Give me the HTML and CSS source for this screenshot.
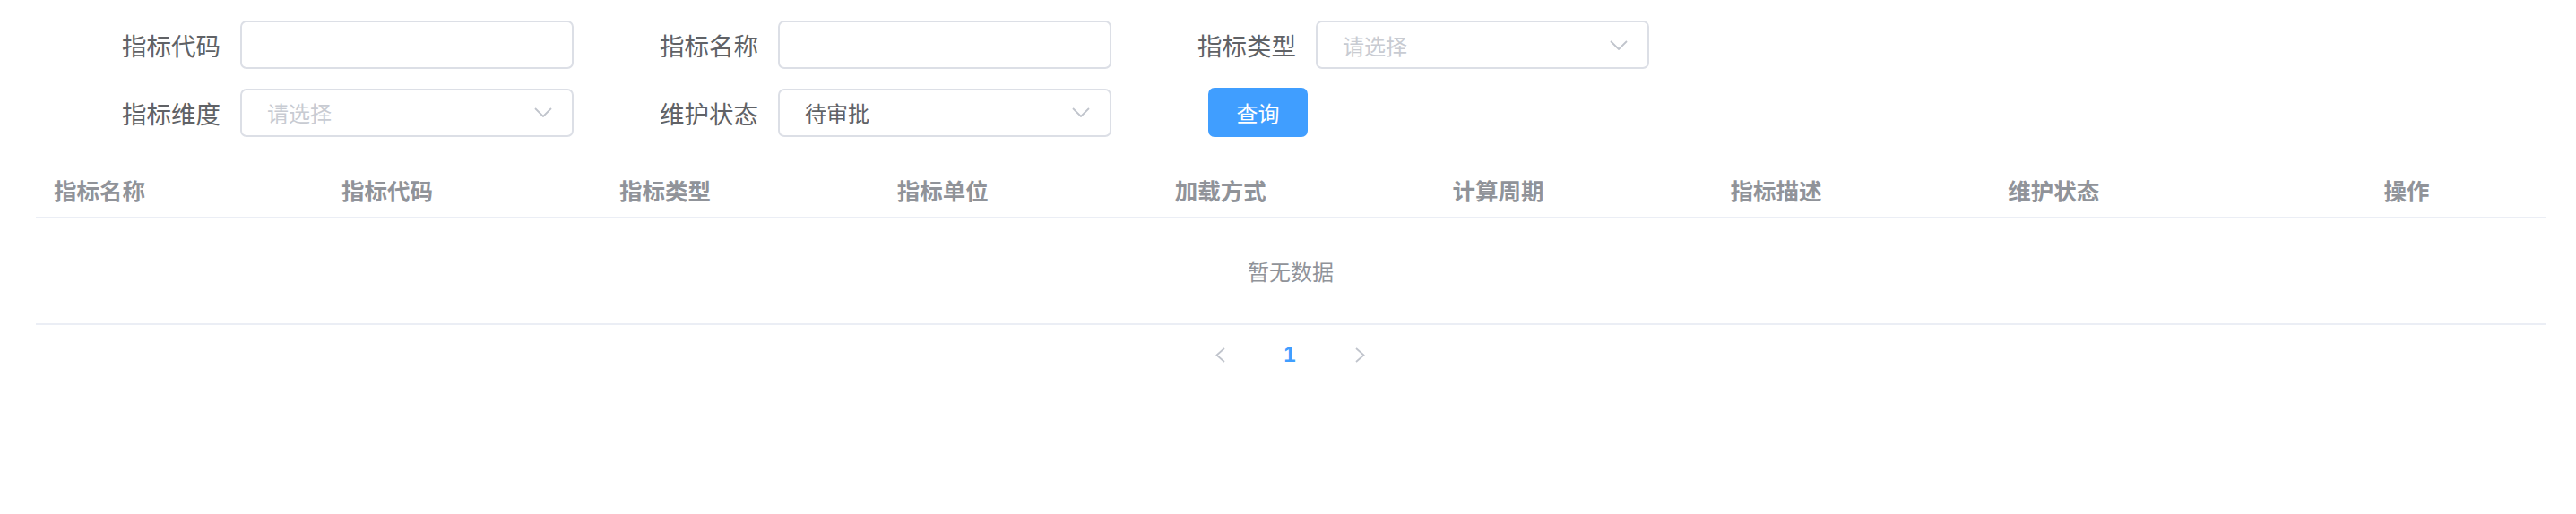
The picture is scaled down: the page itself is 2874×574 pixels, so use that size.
FILE: index.html
```html
<!DOCTYPE html>
<html lang="zh-CN">
<head>
<meta charset="utf-8">
<title>指标管理</title>
<link rel="stylesheet" href="styles.css">
</head>
<body>
<div class="page">
  <form class="filters">
    <div class="row">
      <div class="item">
        <label class="lbl">指标代码</label>
        <div class="ctl"></div>
      </div>
      <div class="item">
        <label class="lbl">指标名称</label>
        <div class="ctl"></div>
      </div>
      <div class="item">
        <label class="lbl">指标类型</label>
        <div class="ctl select"><span class="ph">请选择</span>
          <svg class="arrow" viewBox="0 0 20 11" width="20" height="11"><polyline points="1,1 10,10 19,1" fill="none" stroke="#c0c4cc" stroke-width="1.8"/></svg>
        </div>
      </div>
    </div>
    <div class="row">
      <div class="item">
        <label class="lbl">指标维度</label>
        <div class="ctl select"><span class="ph">请选择</span>
          <svg class="arrow" viewBox="0 0 20 11" width="20" height="11"><polyline points="1,1 10,10 19,1" fill="none" stroke="#c0c4cc" stroke-width="1.8"/></svg>
        </div>
      </div>
      <div class="item">
        <label class="lbl">维护状态</label>
        <div class="ctl select"><span class="val">待审批</span>
          <svg class="arrow" viewBox="0 0 20 11" width="20" height="11"><polyline points="1,1 10,10 19,1" fill="none" stroke="#c0c4cc" stroke-width="1.8"/></svg>
        </div>
      </div>
      <div class="item">
        <button type="button" class="btn">查询</button>
      </div>
    </div>
  </form>

  <div class="table">
    <div class="thead">
      <div class="th">指标名称</div>
      <div class="th">指标代码</div>
      <div class="th">指标类型</div>
      <div class="th">指标单位</div>
      <div class="th">加载方式</div>
      <div class="th">计算周期</div>
      <div class="th">指标描述</div>
      <div class="th">维护状态</div>
      <div class="th center">操作</div>
    </div>
    <div class="empty">暂无数据</div>
  </div>

  <div class="pager">
    <span class="pg-btn"><svg viewBox="0 0 11 17" width="11" height="17"><polyline points="10,1 1.5,8.5 10,16" fill="none" stroke="#c0c4cc" stroke-width="1.8"/></svg></span>
    <span class="pg-num">1</span>
    <span class="pg-btn"><svg viewBox="0 0 11 17" width="11" height="17"><polyline points="1,1 9.5,8.5 1,16" fill="none" stroke="#c0c4cc" stroke-width="1.8"/></svg></span>
  </div>
</div>
</body>
</html>
```

FILE: styles.css
```css
* { box-sizing: border-box; }
html, body {
  margin: 0;
  padding: 0;
  background: #ffffff;
}
body {
  font-family: "Noto Sans CJK SC", "Noto Sans", sans-serif;
  color: #606266;
}
.page {
  padding: 23px 34px 0 40px;
}
.filters {
  margin: 0;
  padding-left: 88px;
  display: flex;
  flex-direction: column;
  gap: 21px;
}
.row {
  display: flex;
  gap: 88px;
}
.item {
  display: flex;
  align-items: center;
  width: 512px;
}
.lbl {
  width: 140px;
  padding-right: 22px;
  text-align: right;
  font-size: 27.5px;
  line-height: 54px;
  color: #606266;
  white-space: nowrap;
}
.ctl {
  width: 372px;
  height: 54px;
  border: 2px solid #dcdfe6;
  border-radius: 7px;
  background: #fff;
  display: flex;
  align-items: center;
  padding: 0 22px 0 28px;
  font-size: 24px;
}
.select {
  justify-content: space-between;
}
.ph { color: #c8cbd2; }
.val { color: #606266; }
.arrow { display: block; }
.btn {
  margin-left: 20px;
  width: 111px;
  height: 55px;
  border: none;
  border-radius: 7px;
  background: #409eff;
  color: #fff;
  font-family: inherit;
  font-size: 24px;
  padding: 0;
}
.table {
  margin-top: 29px;
}
.thead {
  display: grid;
  grid-template-columns: 321px repeat(8, 1fr);
  border-bottom: 2px solid #ebeef5;
}
.th {
  height: 60px;
  line-height: 60px;
  padding-left: 20px;
  font-size: 25.5px;
  font-weight: bold;
  color: #909399;
  white-space: nowrap;
}
.th.center {
  padding-left: 0;
  text-align: center;
}
.empty {
  height: 119px;
  display: flex;
  align-items: center;
  justify-content: center;
  font-size: 24px;
  color: #909399;
  border-bottom: 2px solid #ebeef5;
}
.pager {
  margin-top: 5px;
  display: flex;
  justify-content: center;
  margin-left: -2px;
}
.pg-btn, .pg-num {
  width: 78px;
  height: 56px;
  display: flex;
  align-items: center;
  justify-content: center;
}
.pg-num {
  color: #409eff;
  font-size: 24px;
  font-weight: bold;
  font-family: "Liberation Sans", Arial, sans-serif;
}
```
